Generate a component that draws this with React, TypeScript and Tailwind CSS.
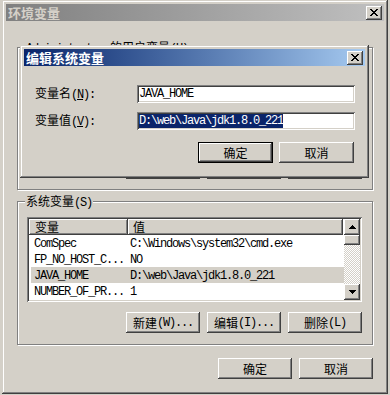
import React from "react";

const RAISED =
  "bg-[#d4d0c8] shadow-[inset_-1px_-1px_0_#404040,inset_1px_1px_0_#ffffff,inset_-2px_-2px_0_#808080]";
const DEFAULT_BTN =
  "bg-[#d4d0c8] border border-black shadow-[inset_-1px_-1px_0_#404040,inset_1px_1px_0_#ffffff,inset_-2px_-2px_0_#808080]";
const SUNKEN =
  "shadow-[inset_1px_1px_0_#808080,inset_-1px_-1px_0_#ffffff,inset_2px_2px_0_#404040,inset_-2px_-2px_0_#d4d0c8]";
const FRAME =
  "bg-[#d4d0c8] shadow-[inset_-1px_-1px_0_#404040,inset_1px_1px_0_#d4d0c8,inset_-2px_-2px_0_#808080,inset_2px_2px_0_#ffffff]";
const MONO = "font-['Liberation_Mono',monospace] tracking-[-1.2px]";
const CJK = "font-['Noto_Sans_CJK_SC',sans-serif]";
const ETCHED =
  "border border-[#808080] shadow-[inset_1px_1px_0_#ffffff,1px_1px_0_#ffffff]";

function Mixed({ t }: { t: string }) {
  const parts = t.split(/([\x00-\x7f]+)/).filter((p) => p.length > 0);
  return (
    <>
      {parts.map((p, i) =>
        /^[\x00-\x7f]+$/.test(p) ? (
          <span key={i} className={MONO}>
            {p}
          </span>
        ) : (
          <span key={i} className={CJK}>
            {p}
          </span>
        )
      )}
    </>
  );
}

function XGlyph() {
  return (
    <svg width="8" height="7" viewBox="0 0 8 7" shapeRendering="crispEdges" fill="#000">
      <rect x="0" y="0" width="2" height="1" />
      <rect x="6" y="0" width="2" height="1" />
      <rect x="1" y="1" width="2" height="1" />
      <rect x="5" y="1" width="2" height="1" />
      <rect x="2" y="2" width="4" height="1" />
      <rect x="3" y="3" width="2" height="1" />
      <rect x="2" y="4" width="4" height="1" />
      <rect x="1" y="5" width="2" height="1" />
      <rect x="5" y="5" width="2" height="1" />
      <rect x="0" y="6" width="2" height="1" />
      <rect x="6" y="6" width="2" height="1" />
    </svg>
  );
}

function Arrow({ down }: { down?: boolean }) {
  return (
    <svg
      width="7"
      height="4"
      viewBox="0 0 7 4"
      shapeRendering="crispEdges"
      fill="#000"
      className={down ? "rotate-180" : ""}
    >
      <rect x="3" y="0" width="1" height="1" />
      <rect x="2" y="1" width="3" height="1" />
      <rect x="1" y="2" width="5" height="1" />
      <rect x="0" y="3" width="7" height="1" />
    </svg>
  );
}

function CloseBtn() {
  return (
    <div className={`${RAISED} w-[16px] h-[14px] flex items-center justify-center pb-[1px]`}>
      <XGlyph />
    </div>
  );
}

function Btn({ label, wide, def }: { label: string; wide?: boolean; def?: boolean }) {
  return (
    <div
      className={`${def ? DEFAULT_BTN : RAISED} ${
        wide ? "w-[75px] h-[21px]" : "w-[74px] h-[21px]"
      } flex items-center justify-center text-[12px] leading-[12px] text-black whitespace-pre`}
    >
      <Mixed t={label} />
    </div>
  );
}

const rows: [string, string][] = [
  ["ComSpec", "C:\\Windows\\system32\\cmd.exe"],
  ["FP_NO_HOST_C...", "NO"],
  ["JAVA_HOME", "D:\\web\\Java\\jdk1.8.0_221"],
  ["NUMBER_OF_PR...", "1"],
];

export default function App() {
  return (
    <div className="relative w-[390px] h-[395px] overflow-hidden bg-[#d4d0c8] pl-[2px] text-black">
      {/* Outer window: 环境变量 */}
      <div className={`${FRAME} w-[386px] h-[394px] p-[4px] flex flex-col`}>
        <div className="h-[17px] bg-linear-to-r from-[#808080] to-[#c0c0c0] flex items-center justify-between pl-[2px] pr-[2px]">
          <span className={`${CJK} text-[13px] leading-[13px] font-bold text-[#d4d0c8]`}>环境变量</span>
          <CloseBtn />
        </div>

        <div className="px-[11px] flex flex-col">
          {/* User variables group (mostly hidden behind the dialog) */}
          <div className={`${ETCHED} relative mt-[26px] h-[143px] flex flex-col justify-end pb-[10px] pr-[10px]`}>
            <div className="absolute left-[7px] top-[-7px] px-[1px] bg-[#d4d0c8] text-[12px] leading-[12px] whitespace-pre">
              <Mixed t="Administrator 的用户变量(U)" />
            </div>
            <div className="flex justify-end gap-[7px]">
              <Btn label="新建(N)..." />
              <Btn label="编辑(E)..." />
              <Btn label="删除(D)" />
            </div>
          </div>

          {/* System variables group */}
          <div className={`${ETCHED} relative mt-[11px] pt-[15px] pb-[11px] pl-[9px] pr-[10px] flex flex-col`}>
            <div className="absolute left-[7px] top-[-7px] px-[1px] bg-[#d4d0c8] text-[12px] leading-[12px] whitespace-pre">
              <Mixed t="系统变量(S)" />
            </div>

            <div className={`${SUNKEN} bg-white h-[85px] p-[2px] flex`}>
              <div className="flex-1 flex flex-col">
                <div className="flex h-[16px] mr-[1px]">
                  <div className={`${RAISED} w-[99px] pl-[6px] flex items-center text-[12px] leading-[12px]`}>
                    <span className={CJK}>变量</span>
                  </div>
                  <div className={`${RAISED} flex-1 pl-[5px] flex items-center text-[12px] leading-[12px]`}>
                    <span className={CJK}>值</span>
                  </div>
                </div>
                {rows.map(([n, v], i) => (
                  <div
                    key={n}
                    className={`ml-[2px] h-[16px] flex items-center text-[12px] leading-[12px] whitespace-pre ${
                      i === 2 ? "bg-[#d4d0c8]" : ""
                    }`}
                  >
                    <div className="w-[97px] pl-[3px]">
                      <Mixed t={n} />
                    </div>
                    <div className="pl-[2px]">
                      <Mixed t={v} />
                    </div>
                  </div>
                ))}
              </div>
              <div className="w-[16px] flex flex-col">
                <div className={`${RAISED} h-[16px] flex items-center justify-center`}>
                  <Arrow />
                </div>
                <div className={`${RAISED} h-[10px]`} />
                <div className="flex-1 [background-image:repeating-conic-gradient(#ffffff_0_25%,#d4d0c8_0_50%)] [background-size:2px_2px]" />
                <div className={`${RAISED} h-[16px] flex items-center justify-center`}>
                  <Arrow down />
                </div>
              </div>
            </div>

            <div className="mt-[10px] flex justify-end gap-[7px]">
              <Btn label="新建(W)..." />
              <Btn label="编辑(I)..." />
              <Btn label="删除(L)" />
            </div>
          </div>

          <div className="mt-[13px] flex justify-end gap-[7px]">
            <Btn label="确定" />
            <Btn label="取消" />
          </div>
        </div>
      </div>

      {/* Edit dialog window on top */}
      <div className={`${FRAME} absolute left-[20px] top-[45px] w-[349px] h-[133px] p-[4px] flex flex-col`}>
        <div className="h-[17px] bg-linear-to-r from-[#0a246a] to-[#a6caf0] flex items-center justify-between pl-[2px] pr-[2px]">
          <span className={`${CJK} text-[13px] leading-[13px] font-bold text-white`}>编辑系统变量</span>
          <CloseBtn />
        </div>
        <div className="pl-[11px] pr-[10px] pt-[19px] flex flex-col text-[12px] leading-[12px]">
          <div className="flex items-center justify-between h-[18px]">
            <span className="whitespace-pre">
              <span className={CJK}>变量名</span>
              <span className={MONO}>
                (<span className="underline">N</span>):
              </span>
            </span>
            <div className={`${SUNKEN} bg-white w-[218px] h-[18px] pl-[2px] flex items-center whitespace-pre`}>
              <span className={MONO}>JAVA_HOME</span>
            </div>
          </div>
          <div className="mt-[9px] flex items-center justify-between h-[18px]">
            <span className="whitespace-pre">
              <span className={CJK}>变量值</span>
              <span className={MONO}>
                (<span className="underline">V</span>):
              </span>
            </span>
            <div className={`${SUNKEN} bg-white w-[218px] h-[18px] pl-[2px] flex items-center whitespace-pre`}>
              <span className={`${MONO} bg-[#0a246a] text-white leading-[14px]`}>D:\web\Java\jdk1.8.0_221</span>
            </div>
          </div>
          <div className="mt-[12px] mr-[1px] flex justify-end gap-[6px]">
            <Btn label="确定" wide def />
            <Btn label="取消" wide />
          </div>
        </div>
      </div>
    </div>
  );
}
